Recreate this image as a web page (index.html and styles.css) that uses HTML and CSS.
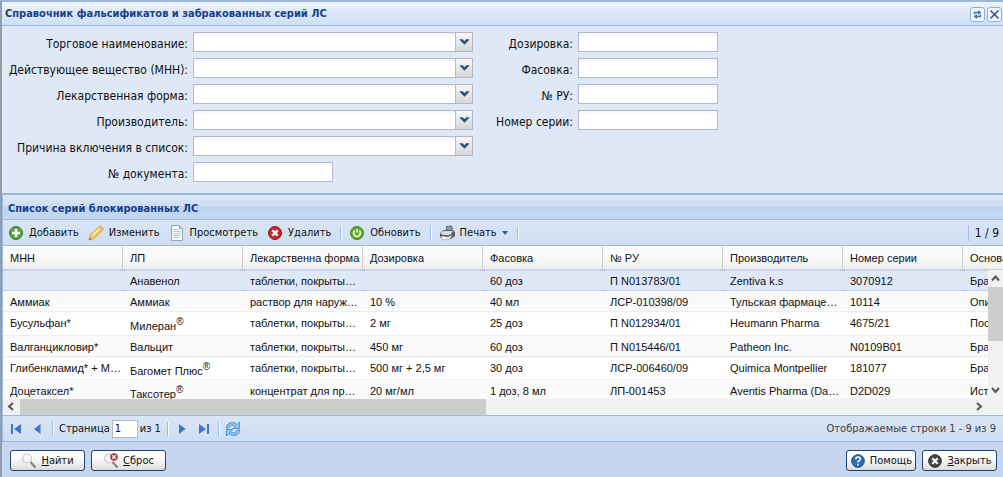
FILE: index.html
```html
<!DOCTYPE html>
<html lang="ru">
<head>
    <meta charset="UTF-8">
    <meta name="viewport" content="width=device-width, initial-scale=1.0">
    <title>Справочник фальсификатов и забракованных серий ЛС</title>
    <link rel="stylesheet" href="styles.css">
</head>
<body>
    <div class="window">
        <header class="window-header">
            <h1>Справочник фальсификатов и забракованных серий ЛС</h1>
            <button class="tool" type="button" aria-label="Обновить окно">
                <svg width="13" height="13" viewBox="0 0 13 13" fill="none" stroke="#4a7296" stroke-width="1.4"><path d="M3.500 6.500V4.500h4M9.500 6.500v2h-4"/><path d="M7 2l3.500 2.500L7 7zM6 6L2.500 8.500L6 11z" fill="#4a7296" stroke="none"/></svg>
            </button>
            <button class="tool" type="button" aria-label="Закрыть окно">
                <svg width="13" height="13" viewBox="0 0 13 13" stroke="#34548c" stroke-width="1.6"><path d="M2.500 2.500l8 8M10.500 2.500l-8 8"/></svg>
            </button>
        </header>

        <form class="filter">
            <div class="fields">
                <label for="trade">Торговое наименование:</label>
                <div class="combo"><select id="trade"></select><svg class="trigger" viewBox="0 0 17 18"><path d="M4 6h3l2 2 2-2h3v1l-5 5-5-5z"/></svg></div>
                <label for="mnn">Действующее вещество (МНН):</label>
                <div class="combo"><select id="mnn"></select><svg class="trigger" viewBox="0 0 17 18"><path d="M4 6h3l2 2 2-2h3v1l-5 5-5-5z"/></svg></div>
                <label for="form">Лекарственная форма:</label>
                <div class="combo"><select id="form"></select><svg class="trigger" viewBox="0 0 17 18"><path d="M4 6h3l2 2 2-2h3v1l-5 5-5-5z"/></svg></div>
                <label for="maker">Производитель:</label>
                <div class="combo"><select id="maker"></select><svg class="trigger" viewBox="0 0 17 18"><path d="M4 6h3l2 2 2-2h3v1l-5 5-5-5z"/></svg></div>
                <label for="reason">Причина включения в список:</label>
                <div class="combo"><select id="reason"></select><svg class="trigger" viewBox="0 0 17 18"><path d="M4 6h3l2 2 2-2h3v1l-5 5-5-5z"/></svg></div>
                <label for="doc">№ документа:</label>
                <input id="doc" type="text">
            </div>
            <div class="fields fields-short">
                <label for="dose">Дозировка:</label>
                <input id="dose" type="text">
                <label for="pack">Фасовка:</label>
                <input id="pack" type="text">
                <label for="ru">№ РУ:</label>
                <input id="ru" type="text">
                <label for="series">Номер серии:</label>
                <input id="series" type="text">
            </div>
        </form>

        <section class="list">
            <h2>Список серий блокированных ЛС</h2>

            <div class="toolbar">
                <button type="button">
                    <svg width="16" height="16" viewBox="0 0 16 16"><circle cx="8" cy="8" r="6.5" fill="#58a03c" stroke="#3b7d28"/><path d="M8 4v8M4 8h8" stroke="#fff" stroke-width="2.6"/></svg>
                    Добавить
                </button>
                <button type="button">
                    <svg width="16" height="16" viewBox="0 0 16 16"><path d="M1 15l1.5-5L11 1.500q1-1 2 0l1.500 1.500q1 1 0 2L6 13.500z" fill="#f6cb58" stroke="#c99a3a"/><path d="M4 11L12 3" stroke="#fff0b4" stroke-width="1.5"/><path d="M1 15l.700-2 1.300 1.300z" fill="#6b5330"/><path d="M11 2l3 3" stroke="#f0b070" stroke-width="1.5"/></svg>
                    Изменить
                </button>
                <button type="button">
                    <svg width="16" height="16" viewBox="0 0 16 16"><path d="M2.500.500h8l3 3v12h-11z" fill="#f4f8fb" stroke="#8ea5b4"/><path d="M10.500.500v3h3" fill="#cbdbe5" stroke="#8ea5b4"/><path d="M4.500 4.500h5M4.500 6.500h7M4.500 8.500h7M4.500 10.500h7M4.500 12.500h6" stroke="#b7c6d0"/></svg>
                    Просмотреть
                </button>
                <button type="button">
                    <svg width="16" height="16" viewBox="0 0 16 16"><circle cx="8" cy="8" r="6.500" fill="#c52a2a" stroke="#8f1717"/><path d="M5.300 5.300l5.400 5.400M10.700 5.300l-5.400 5.400" stroke="#fff" stroke-width="2.400"/></svg>
                    Удалить
                </button>
                <span class="separator"></span>
                <button type="button">
                    <svg width="16" height="16" viewBox="0 0 16 16"><circle cx="8" cy="8" r="6.500" fill="#62aa25" stroke="#47821b"/><path d="M5.600 5.800a3.300 3.300 0 1 0 4.800 0M8 4v3.500" fill="none" stroke="#fff" stroke-width="1.500"/></svg>
                    Обновить
                </button>
                <span class="separator"></span>
                <button type="button">
                    <svg width="16" height="16" viewBox="0 0 16 16"><path d="M7 1l6-.500 1 5-7 2z" fill="#68737c"/><path d="M8 2l4-.500.500 3.500-4 1z" fill="#8e9ba5"/><path d="M1 8l4-3h9l2 2v4l-4 3H4l-3-2z" fill="#5c6063"/><path d="M1 8l4-2h9l-3 4H4z" fill="#d8dadb"/><path d="M2 11l7 1 4-2-2 4-8 1z" fill="#f4f4f1" stroke="#8c8e8f" stroke-width=".500"/></svg>
                    Печать
                    <svg class="caret" width="6" height="4" viewBox="0 0 6 4"><path d="M0 0h6L3 4z" fill="#2f5c96"/></svg>
                </button>
                <span class="separator"></span>
                <span class="counter">1 / 9</span>
            </div>

            <div class="grid">
                <table>
                    <thead>
                        <tr><th>МНН</th><th>ЛП</th><th>Лекарственна форма</th><th>Дозировка</th><th>Фасовка</th><th>№ РУ</th><th>Производитель</th><th>Номер серии</th><th>Основание</th></tr>
                    </thead>
                    <tbody>
                        <tr class="selected"><td></td><td>Анавенол</td><td>таблетки, покрытые оболочкой</td><td></td><td>60 доз</td><td>П N013783/01</td><td>Zentiva k.s</td><td>3070912</td><td>Брак</td></tr>
                        <tr><td>Аммиак</td><td>Аммиак</td><td>раствор для наружного применения</td><td>10 %</td><td>40 мл</td><td>ЛСР-010398/09</td><td>Тульская фармацевтическая фабрика</td><td>10114</td><td>Описание</td></tr>
                        <tr><td>Бусульфан*</td><td>Милеран<sup>®</sup></td><td>таблетки, покрытые оболочкой</td><td>2 мг</td><td>25 доз</td><td>П N012934/01</td><td>Heumann Pharma</td><td>4675/21</td><td>Поставка</td></tr>
                        <tr><td>Валганцикловир*</td><td>Вальцит</td><td>таблетки, покрытые оболочкой</td><td>450 мг</td><td>60 доз</td><td>П N015446/01</td><td>Patheon Inc.</td><td>N0109B01</td><td>Брак</td></tr>
                        <tr><td>Глибенкламид* + Метформин*</td><td>Багомет Плюс<sup>®</sup></td><td>таблетки, покрытые оболочкой</td><td>500 мг + 2,5 мг</td><td>30 доз</td><td>ЛСР-006460/09</td><td>Quimica Montpellier</td><td>181077</td><td>Брак</td></tr>
                        <tr><td>Доцетаксел*</td><td>Таксотер<sup>®</sup></td><td>концентрат для приготовления раствора</td><td>20 мг/мл</td><td>1 доз, 8 мл</td><td>ЛП-001453</td><td>Aventis Pharma (Dagenham)</td><td>D2D029</td><td>Истек срок</td></tr>
                    </tbody>
                </table>
                <div class="vscroll">
                    <svg width="15" height="17" viewBox="0 0 15 17"><path d="M4 10.500l3.500-4 3.500 4"/></svg>
                    <div class="vthumb"></div>
                    <svg width="15" height="17" viewBox="0 0 15 17"><path d="M4 6l3.500 4L11 6"/></svg>
                </div>
            </div>
            <div class="hscroll">
                <svg width="17" height="15" viewBox="0 0 17 15"><path d="M10 4L6 7.500 10 11"/></svg>
                <div class="htrack"><div class="hthumb"></div></div>
                <svg width="17" height="15" viewBox="0 0 17 15"><path d="M6 4l4 3.500L6 11"/></svg>
            </div>

            <div class="paging">
                <button type="button" aria-label="Первая страница"><svg width="16" height="16" viewBox="0 0 16 16"><path d="M3 3h2v10H3zM13 3v10L6 8z"/></svg></button>
                <button type="button" aria-label="Предыдущая страница"><svg width="16" height="16" viewBox="0 0 16 16"><path d="M10.500 3v10L4 8z"/></svg></button>
                <span class="separator"></span>
                <label for="page">Страница</label>
                <input id="page" type="text" value="1">
                <span>из 1</span>
                <span class="separator"></span>
                <button type="button" aria-label="Следующая страница"><svg width="16" height="16" viewBox="0 0 16 16"><path d="M5 3v10l6.500-5z"/></svg></button>
                <button type="button" aria-label="Последняя страница"><svg width="16" height="16" viewBox="0 0 16 16"><path d="M3 3v10L10 8zM11 3h2v10h-2z"/></svg></button>
                <span class="separator"></span>
                <button type="button" aria-label="Обновить"><svg width="16" height="16" viewBox="0 0 16 16"><path d="M1 7C1.500 3.500 4 1.500 7.500 1.500c2 0 3.500.700 4.600 1.900L14.500 1v6.500H8l2.300-2.300C8.500 3.500 5 3.800 3.800 7zM15 9c-.500 3.500-3 5.500-6.500 5.500-2 0-3.500-.700-4.600-1.900L1.500 15V8.500H8l-2.300 2.300c1.800 1.700 5.300 1.400 6.500-1.800z" fill="#8cc4ee" stroke="#3f86c4" stroke-width=".800"/></svg></button>
                <span class="summary">Отображаемые строки 1 - 9 из 9</span>
            </div>
        </section>

        <footer>
            <button class="btn" type="button">
                <svg width="16" height="16" viewBox="0 0 16 16"><circle cx="6" cy="5.500" r="4.500" fill="#f7f7f5" stroke="#c6c8ca" stroke-width="1.200"/><path d="M9.500 9l5 5.500" stroke="#7f8387" stroke-width="2"/></svg>
                <span><u>Н</u>айти</span>
            </button>
            <button class="btn" type="button">
                <svg width="16" height="16" viewBox="0 0 16 16"><circle cx="6" cy="5.500" r="4.500" fill="#f7f7f5" stroke="#c6c8ca" stroke-width="1.200"/><path d="M9.500 9l5 5.500" stroke="#7f8387" stroke-width="2"/><circle cx="11" cy="4" r="3.800" fill="#b82e38"/><path d="M9.300 2.300l3.400 3.400M12.700 2.300L9.300 5.700" stroke="#fff" stroke-width="1.300"/></svg>
                <span><u>С</u>брос</span>
            </button>
            <span class="spacer"></span>
            <button class="btn btn-help" type="button">
                <svg width="16" height="16" viewBox="0 0 16 16"><circle cx="8" cy="8" r="6.300" fill="#2c6eb5" stroke="#174a88"/><path d="M5.800 6.300q0-2.300 2.300-2.300t2.200 2q0 1-1.200 1.700T8 9.400M8 10.700v1.700" fill="none" stroke="#fff" stroke-width="1.600"/></svg>
                <span>Помощь</span>
            </button>
            <button class="btn" type="button">
                <svg width="16" height="16" viewBox="0 0 16 16"><circle cx="8" cy="8" r="6.300" fill="#454545" stroke="#2b2b2b"/><path d="M5.300 5.300l5.400 5.400M10.700 5.300l-5.400 5.400" stroke="#fff" stroke-width="2.200"/></svg>
                <span><u>З</u>акрыть</span>
            </button>
        </footer>
    </div>
</body>
</html>
```

FILE: styles.css
```css
* {
    margin: 0;
    padding: 0;
    box-sizing: border-box;
}

body {
    font-family: "DejaVu Sans Condensed", "DejaVu Sans", sans-serif;
    font-size: 11px;
    line-height: 16px;
    color: #111;
    background: #dfe8f6;
}

button,
input,
select {
    font: inherit;
    color: inherit;
}

button {
    border: none;
    background: none;
    white-space: nowrap;
}

svg {
    display: block;
    flex: none;
}

.window {
    display: flex;
    flex-direction: column;
    height: 100vh;
    border-top: 2px solid #9db6dc;
    border-left: 2px solid #8f9fb0;
}

/* header */
.window-header {
    display: flex;
    align-items: center;
    gap: 2px;
    height: 24px;
    padding: 1px 1px 0 3px;
    border-bottom: 1px solid #99bbe8;
    background: linear-gradient(#f0f5fc, #dfe8f8 40%, #cfe0f5);
}

h1,
h2 {
    font-size: 11px;
    line-height: 16px;
    color: #15428b;
}

h1 {
    flex: 1;
}

.tool {
    width: 15px;
    height: 15px;
    border: 1px solid #8db2e3;
    border-radius: 3px;
    background: #f3f8fe;
}

/* filter form */
.filter {
    display: flex;
    padding: 6px 0 11px 1px;
    border-bottom: 2px solid #99b4d6;
    font-size: 12px;
}

.fields {
    display: grid;
    grid-template-columns: 185px 280px;
    grid-auto-rows: 20px;
    align-content: start;
    gap: 6px 5px;
}

.fields-short {
    grid-template-columns: 100px 140px;
}

.fields label {
    padding-top: 4px;
    text-align: right;
    white-space: nowrap;
}

.fields input,
.combo {
    width: 140px;
    height: 20px;
    border: 1px solid #b5b8c8;
    background: linear-gradient(#f1f2f4, #fff 4px);
}

.combo {
    position: relative;
    width: 280px;
}

.combo select {
    width: 100%;
    height: 18px;
    padding: 0 20px 0 3px;
    border: none;
    background: none;
    appearance: none;
}

.trigger {
    position: absolute;
    top: 0;
    right: 0;
    width: 17px;
    height: 18px;
    border-left: 1px solid #b5b8c8;
    background: linear-gradient(#f8f8f8, #d4d6d8);
    fill: #34537c;
    pointer-events: none;
}

/* list */
.list {
    flex: 1;
    display: flex;
    flex-direction: column;
    min-height: 0;
    border-left: 1px solid #99bbe8;
}

h2 {
    padding: 6px 5px 2px;
    border-bottom: 1px solid #99bbe8;
    background: linear-gradient(#dae7f6 0, #cddef3 11px, #bdd3ef 12px, #c6d8f1 100%);
}

.toolbar,
.paging {
    display: flex;
    align-items: center;
    height: 26px;
    border-bottom: 1px solid #99bbe8;
    background: linear-gradient(#d9e5f5, #cfdef2);
}

.toolbar {
    padding: 0 4px 0 5px;
}

.toolbar button {
    display: flex;
    align-items: center;
    gap: 5px;
    margin-right: 9px;
}

.separator {
    width: 2px;
    height: 14px;
    margin-right: 7px;
    border-left: 1px solid #9fbce2;
    border-right: 1px solid #fff;
}

.counter {
    margin-left: auto;
    padding-left: 6px;
    border-left: 1px solid #9fbce2;
    font-size: 12px;
}

.grid {
    position: relative;
    flex: 1;
    min-height: 0;
    overflow: hidden;
    background: #fff;
}

table {
    width: 1080px;
    table-layout: fixed;
    border-collapse: separate;
    border-spacing: 0;
    font-family: "Liberation Sans", Arial, sans-serif;
    font-size: 11px;
    line-height: 13px;
}

th,
td {
    padding: 4px 2px 2px 7px;
    overflow: hidden;
    text-align: left;
    text-overflow: ellipsis;
    white-space: nowrap;
    vertical-align: top;
}

th {
    height: 24px;
    padding: 6px 0 4px 7px;
    border-right: 1px solid #d0d0d0;
    border-bottom: 1px solid #d0d0d0;
    background: linear-gradient(#fafafa 50%, #eee);
    font-weight: normal;
    text-overflow: clip;
}

td {
    height: 21px;
    border-top: 1px solid #fafafa;
    border-bottom: 1px solid #ededed;
}

tr:nth-child(even) td {
    background: #fafafa;
}

.selected td {
    border-top: 1px dotted #a3bae9;
    border-bottom: 1px dotted #a3bae9;
    background: #dfe8f6;
}

sup {
    font-size: 10px;
    line-height: 10px;
}

.vscroll {
    position: absolute;
    top: 24px;
    right: 0;
    bottom: 0;
    display: flex;
    flex-direction: column;
    width: 15px;
    background: #f1f1f1;
}

.vthumb {
    height: 54px;
    margin-bottom: auto;
    background: #cdcdcd;
}

.vscroll svg,
.hscroll svg {
    fill: none;
    stroke: #555;
    stroke-width: 2;
}

.hscroll {
    display: flex;
    height: 17px;
    padding-right: 15px;
    border-bottom: 1px solid #99bbe8;
    background: #f1f1f1;
}

.htrack {
    flex: 1;
}

.hthumb {
    width: 49%;
    height: 16px;
    background: #cdcdcd;
}

/* paging */
.paging {
    padding: 0 7px 0 5px;
}

.paging button {
    margin-right: 6px;
    fill: #3f76c8;
}

.paging input {
    width: 26px;
    height: 18px;
    margin: 0 2px;
    padding: 0 2px;
    border: 1px solid #b5b8c8;
    background: #fff;
}

.paging .separator {
    margin-right: 5px;
}

.paging span + .separator {
    margin-left: 6px;
}

.summary {
    margin-left: auto;
    color: #444;
}

/* footer */
footer {
    display: flex;
    align-items: center;
    gap: 6px;
    height: 35px;
    padding: 2px 6px 0 8px;
    background: #c6d6ef;
}

.spacer {
    flex: 1;
}

.btn {
    display: flex;
    align-items: center;
    justify-content: center;
    gap: 4px;
    min-width: 75px;
    height: 21px;
    padding: 0 3px;
    border: 1px solid #1c4470;
    border-radius: 3px;
    background: linear-gradient(#fff 30%, #dcdcdc);
}

.btn-help {
    min-width: 70px;
}
```
